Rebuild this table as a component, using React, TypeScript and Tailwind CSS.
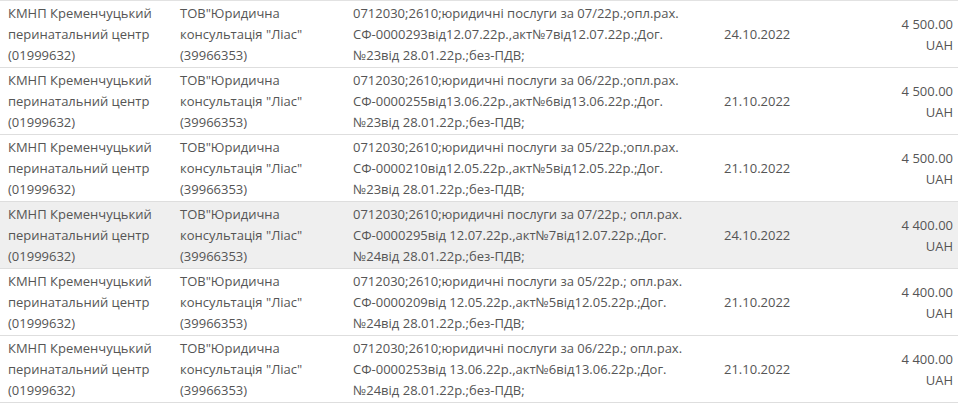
const rows = [
  { desc: ['0712030;2610;юридичні послуги за 07/22р.;опл.рах.', 'СФ-0000293від12.07.22р.,акт№7від12.07.22р.;Дог.', '№23від 28.01.22р.;без-ПДВ;'], date: '24.10.2022', sum: '4 500.00' },
  { desc: ['0712030;2610;юридичні послуги за 06/22р.;опл.рах.', 'СФ-0000255від13.06.22р.,акт№6від13.06.22р.;Дог.', '№23від 28.01.22р.;без-ПДВ;'], date: '21.10.2022', sum: '4 500.00' },
  { desc: ['0712030;2610;юридичні послуги за 05/22р.;опл.рах.', 'СФ-0000210від12.05.22р.,акт№5від12.05.22р.;Дог.', '№23від 28.01.22р.;без-ПДВ;'], date: '21.10.2022', sum: '4 500.00' },
  { desc: ['0712030;2610;юридичні послуги за 07/22р.; опл.рах.', 'СФ-0000295від 12.07.22р.,акт№7від12.07.22р.;Дог.', '№24від 28.01.22р.;без-ПДВ;'], date: '24.10.2022', sum: '4 400.00', hover: true },
  { desc: ['0712030;2610;юридичні послуги за 05/22р.; опл.рах.', 'СФ-0000209від 12.05.22р.,акт№5від12.05.22р.;Дог.', '№24від 28.01.22р.;без-ПДВ;'], date: '21.10.2022', sum: '4 400.00' },
  { desc: ['0712030;2610;юридичні послуги за 06/22р.; опл.рах.', 'СФ-0000253від 13.06.22р.,акт№6від13.06.22р.;Дог.', '№24від 28.01.22р.;без-ПДВ;'], date: '21.10.2022', sum: '4 400.00' },
]

export default function App() {
  return (
    <div className="w-[965px] h-[408px] bg-white overflow-hidden font-['Open_Sans',sans-serif] text-[13px] leading-[21px] text-[#555]">
      <div className="w-[958px] border-t border-[#e2e2e2]">
        {rows.map((r, i) => (
          <div
            key={i}
            className={`grid grid-cols-[172px_173px_371px_144px_1fr] border-b border-[#dedede] pt-[2px] pb-[1px] ${r.hover ? 'bg-[#efefef]' : ''}`}
          >
            <div className="pl-[8px]">
              <div>КМНП Кременчуцький</div>
              <div>перинатальний центр</div>
              <div>(01999632)</div>
            </div>
            <div className="pl-[8px]">
              <div>ТОВ"Юридична</div>
              <div>консультація "Ліас"</div>
              <div>(39966353)</div>
            </div>
            <div className="pl-[8px] whitespace-nowrap">
              {r.desc.map((d, j) => (
                <div key={j}>{d}</div>
              ))}
            </div>
            <div className="pl-[8px] flex items-center">{r.date}</div>
            <div className="pr-[5px] flex flex-col justify-center items-end">
              <div>{r.sum}</div>
              <div>UAH</div>
            </div>
          </div>
        ))}
      </div>
    </div>
  )
}
